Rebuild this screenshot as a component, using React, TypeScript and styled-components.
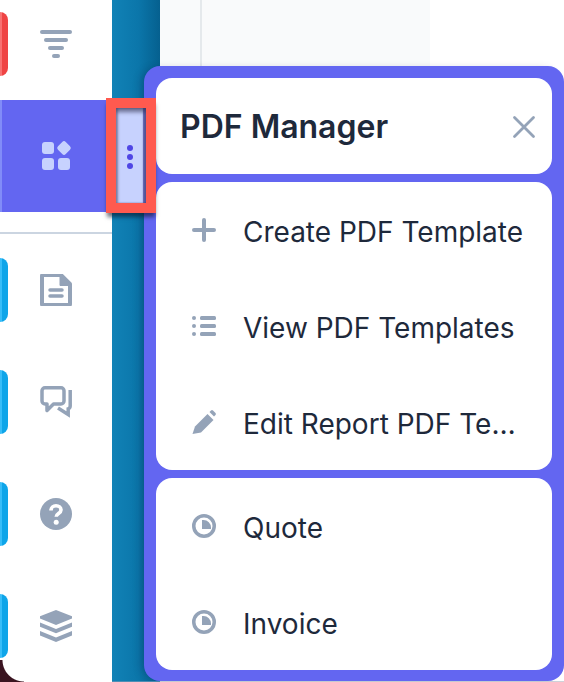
import React from "react";
import styled, { createGlobalStyle } from "styled-components";

const Global = createGlobalStyle`
  html, body { margin: 0; padding: 0; background: #fff; }
  body { width: 564px; height: 682px; overflow: hidden; font-family: Inter, "Liberation Sans", sans-serif; }
`;

const Page = styled.div`
  position: relative;
  display: flex;
  width: 564px;
  height: 682px;
  overflow: hidden;
  background: #cfd2d9;
`;

const Sidebar = styled.nav`
  width: 112px;
  height: 694px;
  margin-top: -12px;
  flex: none;
  display: flex;
  flex-direction: column;
  background: #fff;
`;

const SideItem = styled.div<{ $active?: boolean }>`
  height: 112px;
  flex: none;
  display: flex;
  align-items: center;
  background: ${(p) => (p.$active ? "#6366f1" : "#fff")};
`;

const Pill = styled.span<{ $color: string; $edge: string }>`
  width: 8px;
  height: 64px;
  flex: none;
  border-radius: 0 8px 8px 0;
  background: linear-gradient(90deg, ${(p) => p.$edge} 0 2px, ${(p) => p.$color} 2px);
`;

const ActiveEdge = styled.span`
  width: 2px;
  height: 112px;
  flex: none;
  background: #818cf8;
`;

const IconSlot = styled.span<{ $offset: number }>`
  width: 32px;
  height: 32px;
  margin-left: ${(p) => p.$offset}px;
  flex: none;
  display: block;
  svg { display: block; width: 32px; height: 32px; }
`;

const Divider = styled.div`
  height: 22px;
  flex: none;
  display: flex;
  align-items: flex-end;
  &::after {
    content: "";
    width: 100%;
    height: 2px;
    background: #cbd5e1;
  }
`;

const Strip = styled.div`
  width: 48px;
  height: 682px;
  box-sizing: border-box;
  flex: none;
  border-bottom: 1px solid #4d8fb5;
  background: linear-gradient(90deg, #1182b6 0%, #0b76aa 55%, #05608f 100%);
`;

const Backdrop = styled.div`
  flex: 1;
  display: flex;
  height: 681px;
  background: #fff;
`;

const Ghost = styled.div`
  width: 270px;
  height: 100%;
  padding-left: 40px;
  box-sizing: border-box;
  background: #f9fafb;
`;

const GhostLine = styled.div`
  width: 2px;
  height: 100%;
  background: #e5e9ec;
`;

const Popup = styled.aside`
  position: absolute;
  left: 144px;
  top: 66px;
  width: 420px;
  height: 615px;
  box-sizing: border-box;
  padding: 12px;
  display: flex;
  flex-direction: column;
  gap: 8px;
  border-radius: 16px;
  background: #6366f1;
  box-shadow: -6px 0 10px -4px rgba(0, 20, 60, 0.3);
`;

const Header = styled.header`
  height: 96px;
  flex: none;
  box-sizing: border-box;
  padding: 0 16px 0 24px;
  display: flex;
  align-items: center;
  justify-content: space-between;
  border-radius: 16px;
  background: #fff;
`;

const Title = styled.h2`
  margin: 0;
  font-size: 32px;
  line-height: 97px;
  height: 96px;
  font-weight: 600;
  color: #1e293b;
`;

const Close = styled.span`
  width: 24px;
  height: 24px;
  margin-top: 2px;
  display: block;
  svg { display: block; width: 24px; height: 24px; }
`;

const Card = styled.section`
  flex: none;
  border-radius: 16px;
  background: #fff;
`;

const MenuRow = styled.div`
  height: 96px;
  box-sizing: border-box;
  padding: 0 28px 0 32px;
  display: flex;
  align-items: center;
  gap: 23px;
`;

const MenuIcon = styled.span`
  width: 32px;
  height: 32px;
  flex: none;
  display: block;
  svg { display: block; width: 32px; height: 32px; }
`;

const MenuLabel = styled.span`
  min-width: 0;
  flex: 1;
  padding-top: 4px;
  font-size: 28px;
  line-height: 36px;
  color: #1e293b;
  white-space: nowrap;
  overflow: hidden;
  text-overflow: ellipsis;
`;

const Marker = styled.div`
  position: absolute;
  left: 106px;
  top: 98px;
  width: 50px;
  height: 115px;
  box-sizing: border-box;
  border: 10px solid #ff5a4f;
  box-shadow: 0 5px 4px -1px rgba(10, 20, 40, 0.6);
`;

const Handle = styled.div`
  width: 100%;
  height: 100%;
  box-sizing: border-box;
  padding: 3px 2px 0 0;
  display: flex;
  flex-direction: column;
  align-items: center;
  justify-content: center;
  gap: 3px;
  background: #c7d2fe;
  box-shadow: inset 0 4px 4px rgba(40, 40, 70, 0.6), inset 2px 0 2px rgba(40, 40, 70, 0.3), inset -3px 0 1px rgba(60, 60, 150, 0.75);
`;

const Dot = styled.span`
  width: 6px;
  height: 6px;
  border-radius: 50%;
  background: #4f46e5;
`;

const Corner = styled.div`
  position: absolute;
  left: 0;
  bottom: 0;
  width: 24px;
  height: 22px;
  background: radial-gradient(circle at 100% 0, transparent 21px, #3a1420 22px);
`;

const G = "#94a3b8";

const FilterIcon = () => (
  <svg viewBox="0 0 32 32" fill={G}>
    <rect x="0" y="2" width="32" height="4" rx="2" />
    <rect x="4" y="10" width="24" height="4" rx="2" />
    <rect x="8" y="18" width="16" height="4" rx="2" />
    <rect x="12" y="26" width="8" height="4" rx="2" />
  </svg>
);

const WidgetIcon = () => (
  <svg viewBox="0 0 32 32" fill="#c7d2fe">
    <rect x="2" y="2" width="12" height="12" rx="3" />
    <rect x="18.500" y="2.500" width="11" height="11" rx="2.500" transform="rotate(45 24 8)" />
    <rect x="2" y="18" width="12" height="12" rx="3" />
    <rect x="18" y="18" width="12" height="12" rx="3" />
  </svg>
);

const DocIcon = () => (
  <svg viewBox="0 0 32 32" fill="none" stroke={G}>
    <path d="M2 2a1 1 0 0 1 1-1H21L30 10v20a1 1 0 0 1-1 1H3a1 1 0 0 1-1-1z" strokeWidth="4" strokeLinejoin="round" />
    <path d="M20 1V11.500H31z" fill={G} strokeWidth="1" />
    <path d="M10 16h12M10 22h12" strokeWidth="3.500" strokeLinecap="round" />
  </svg>
);

const ChatIcon = () => (
  <svg viewBox="0 0 32 32" fill="none" stroke={G} strokeWidth="3.500">
    <path d="M5 1.750h16a3 3 0 0 1 3 3V15a3 3 0 0 1-3 3H13.500L7 24.500V18H5a3 3 0 0 1-3-3V4.750a3 3 0 0 1 3-3z" strokeLinejoin="round" />
    <path d="M30.200 4V20a3 3 0 0 1-2 2.800V28.500L18 22" />
  </svg>
);

const HelpIcon = () => (
  <svg viewBox="0 0 32 32">
    <circle cx="16" cy="16" r="16" fill={G} />
    <path d="M11 12.500c0-2.800 2.200-4.700 5-4.700s5 1.800 5 4.200c0 3.500-4.800 3.600-4.800 6.800" fill="none" stroke="#fff" strokeWidth="3.600" />
    <circle cx="16.200" cy="24.200" r="2.500" fill="#fff" />
  </svg>
);

const LayersIcon = () => (
  <svg viewBox="0 0 32 32" fill={G}>
    <path d="M16 0 32 6.200V8.500L16 15 0 8.500V6.200z" />
    <path d="M0 12.500 16 19l16-6.500v4.300L16 23.200 0 16.800z" />
    <path d="M0 21 16 27.500 32 21v4.500L16 32 0 25.500z" />
  </svg>
);

const CloseIcon = () => (
  <svg viewBox="0 0 24 24" fill="none" stroke={G} strokeWidth="2.800" strokeLinecap="round">
    <path d="M2.500 2.500 21.500 21.500M21.500 2.500 2.500 21.500" />
  </svg>
);

const PlusIcon = () => (
  <svg viewBox="0 0 32 32" fill="none" stroke={G} strokeWidth="4" strokeLinecap="round">
    <path d="M16 6v20M6 16h20" />
  </svg>
);

const ListIcon = () => (
  <svg viewBox="0 0 32 32" fill={G}>
    <circle cx="6" cy="8" r="2" />
    <circle cx="6" cy="16" r="2" />
    <circle cx="6" cy="24" r="2" />
    <rect x="12" y="6" width="16" height="4" rx="1.500" />
    <rect x="12" y="14" width="16" height="4" rx="1.500" />
    <rect x="12" y="22" width="16" height="4" rx="1.500" />
  </svg>
);

const PencilIcon = () => (
  <svg viewBox="0 0 32 32" fill={G}>
    <path d="M7 20.500 19.500 8l6 6L13 26.500l-8.500 1.500z" />
    <path d="M21.500 6l1.500-1.500a1.500 1.500 0 0 1 2 0l2.500 2.500a1.500 1.500 0 0 1 0 2l-1.500 1.500z" />
  </svg>
);

const ClockIcon = () => (
  <svg viewBox="0 0 32 32">
    <circle cx="16" cy="16" r="10.250" fill="none" stroke={G} strokeWidth="3.500" />
    <path d="M14 10h1.500a7.500 7.500 0 0 1 7.500 7.500V19H14z" fill={G} />
  </svg>
);

const sideIcons = [
  { icon: <DocIcon />, key: "doc" },
  { icon: <ChatIcon />, key: "chat" },
  { icon: <HelpIcon />, key: "help" },
  { icon: <LayersIcon />, key: "layers" },
];

const tools = [
  { icon: <PlusIcon />, label: "Create PDF Template" },
  { icon: <ListIcon />, label: "View PDF Templates" },
  { icon: <PencilIcon />, label: "Edit Report PDF Template" },
];

const docs = ["Quote", "Invoice"];

export default function App() {
  return (
    <Page>
      <Global />
      <Sidebar>
        <SideItem>
          <Pill $color="#ef4444" $edge="#f87171" />
          <IconSlot $offset={32}><FilterIcon /></IconSlot>
        </SideItem>
        <SideItem $active>
          <ActiveEdge />
          <IconSlot $offset={38}><WidgetIcon /></IconSlot>
        </SideItem>
        <Divider />
        {sideIcons.map((s) => (
          <SideItem key={s.key}>
            <Pill $color="#0ea5e9" $edge="#38bdf8" />
            <IconSlot $offset={32}>{s.icon}</IconSlot>
          </SideItem>
        ))}
      </Sidebar>
      <Strip />
      <Backdrop>
        <Ghost><GhostLine /></Ghost>
      </Backdrop>
      <Corner />
      <Popup>
        <Header>
          <Title>PDF Manager</Title>
          <Close><CloseIcon /></Close>
        </Header>
        <Card>
          {tools.map((t) => (
            <MenuRow key={t.label}>
              <MenuIcon>{t.icon}</MenuIcon>
              <MenuLabel>{t.label}</MenuLabel>
            </MenuRow>
          ))}
        </Card>
        <Card>
          {docs.map((d) => (
            <MenuRow key={d}>
              <MenuIcon><ClockIcon /></MenuIcon>
              <MenuLabel>{d}</MenuLabel>
            </MenuRow>
          ))}
        </Card>
      </Popup>
      <Marker>
        <Handle>
          <Dot />
          <Dot />
          <Dot />
        </Handle>
      </Marker>
    </Page>
  );
}
